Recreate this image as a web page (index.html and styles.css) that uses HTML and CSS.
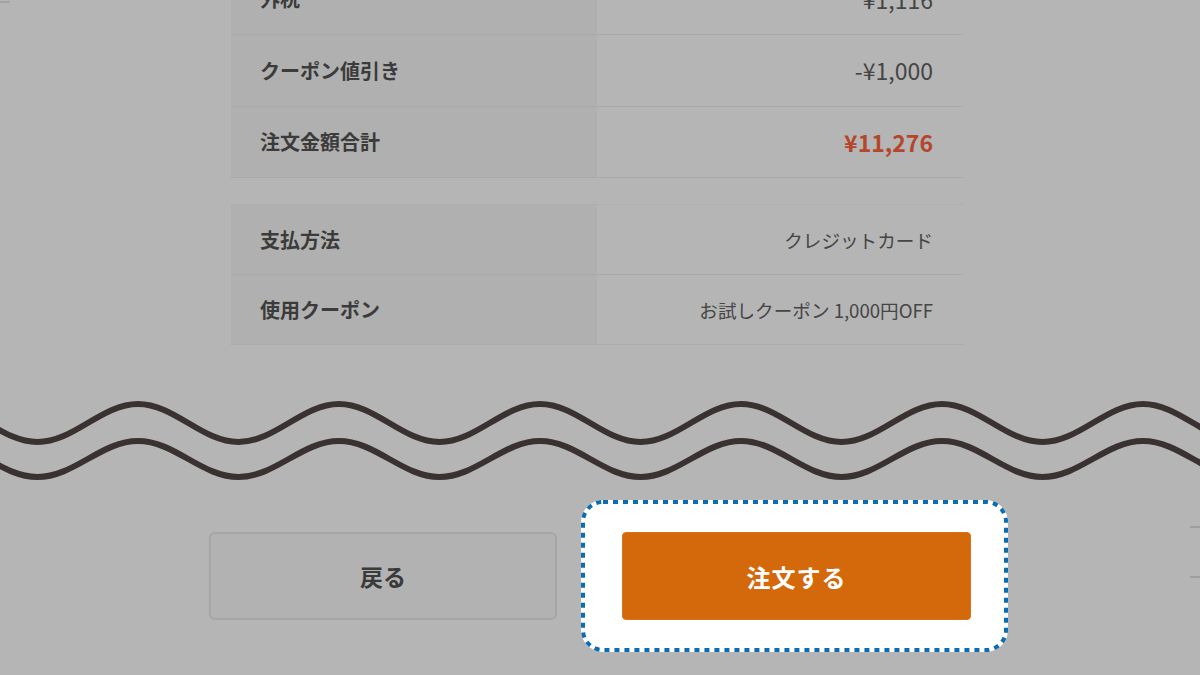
FILE: index.html
```html
<!DOCTYPE html>
<html lang="ja">
<head>
<meta charset="utf-8">
<title>注文確認</title>
<link rel="stylesheet" href="styles.css">
</head>
<body>
<div class="page">
  <div class="top-frag"></div>
  <div class="summary first">
    <div class="row"><div class="label">外税</div><div class="value num">¥1,116</div></div>
    <div class="row"><div class="label">クーポン値引き</div><div class="value num">-¥1,000</div></div>
    <div class="row"><div class="label">注文金額合計</div><div class="value num total">¥11,276</div></div>
  </div>
  <div class="summary second">
    <div class="row"><div class="label">支払方法</div><div class="value">クレジットカード</div></div>
    <div class="row"><div class="label">使用クーポン</div><div class="value">お試しクーポン 1,000円OFF</div></div>
  </div>
  <svg class="waves" width="1200" height="100" viewBox="0 0 1200 100" aria-hidden="true">
    <path d="M -63 15 c 36.6 0 63.9 38 100.5 38 s 63.9 -38 100.5 -38 s 63.9 38 100.5 38 s 63.9 -38 100.5 -38 s 63.9 38 100.5 38 s 63.9 -38 100.5 -38 s 63.9 38 100.5 38 s 63.9 -38 100.5 -38 s 63.9 38 100.5 38 s 63.9 -38 100.5 -38 s 63.9 38 100.5 38 s 63.9 -38 100.5 -38 s 63.9 38 100.5 38" />
    <path d="M -63 52 c 36.6 0 63.9 36 100.5 36 s 63.9 -36 100.5 -36 s 63.9 36 100.5 36 s 63.9 -36 100.5 -36 s 63.9 36 100.5 36 s 63.9 -36 100.5 -36 s 63.9 36 100.5 36 s 63.9 -36 100.5 -36 s 63.9 36 100.5 36 s 63.9 -36 100.5 -36 s 63.9 36 100.5 36 s 63.9 -36 100.5 -36 s 63.9 36 100.5 36" />
  </svg>
  <div class="actions">
    <button class="btn btn-back" type="button">戻る</button>
    <div class="focus-ring">
      <svg class="ring-line" width="427" height="152" viewBox="0 0 427 152" aria-hidden="true">
        <rect x="2" y="2" width="423" height="148" rx="20" ry="20" />
      </svg>
      <button class="btn btn-order" type="button">注文する</button>
    </div>
    <div class="edge-frag"></div>
  </div>
</div>
</body>
</html>
```
FILE: styles.css
```css
* { box-sizing: border-box; }
html, body { margin: 0; padding: 0; }
body {
  width: 1200px;
  height: 675px;
  overflow: hidden;
  background: #b5b5b5;
  font-family: "Noto Sans CJK JP", "Noto Sans", sans-serif;
  color: #3c3c3c;
}
.page {
  width: 1200px;
  height: 675px;
  display: flex;
  flex-direction: column;
}
.top-frag {
  width: 10px;
  height: 2px;
  margin-top: 1px;
  background: #a3a3a3;
  flex: none;
}
.summary {
  width: 732px;
  margin-left: 231px;
  flex: none;
}
.summary.first {
  margin-top: -39.5px;
}
.summary.second {
  margin-top: 26px;
  border-top: 1px dotted #a9a9a9;
}
.row {
  display: flex;
  height: 71.5px;
  border-bottom: 1px solid #aaaaaa;
}
.second .row { height: 70px; }
.label {
  width: 366px;
  flex: none;
  background: #b0b0b0;
  padding-left: 29px;
  display: flex;
  align-items: center;
  font-size: 20px;
  font-weight: 700;
  color: #3b3b3b;
}
.value {
  flex: 1;
  display: flex;
  align-items: center;
  justify-content: flex-end;
  padding-right: 30px;
  font-size: 18.6px;
  color: #454545;
}
.value.num {
  font-size: 23px;
}
.value.total {
  color: #b3462b;
  font-weight: 700;
}
.waves {
  display: block;
  flex: none;
  margin-top: 44px;
}
.waves path {
  fill: none;
  stroke: #3a3230;
  stroke-width: 6;
  stroke-linecap: round;
}
.actions {
  display: flex;
  align-items: center;
  padding-left: 209px;
  margin-top: 11px;
  flex: none;
}
.btn {
  width: 348px;
  height: 88px;
  font-family: "Noto Sans CJK JP", "Noto Sans", sans-serif;
  font-weight: 700;
  cursor: pointer;
}
.btn-back {
  background: #b2b2b2;
  border: 2px solid #a6a6a6;
  border-radius: 6px;
  font-size: 23px;
  color: #3a3a3a;
}
.focus-ring {
  position: relative;
  width: 427px;
  height: 152px;
  margin-left: 24px;
  background: #ffffff;
  border-radius: 22px;
  padding: 32px 37px 32px 41px;
}
.ring-line {
  position: absolute;
  left: 0;
  top: 0;
  display: block;
}
.ring-line rect {
  fill: none;
  stroke: #0a6db3;
  stroke-width: 4;
  stroke-dasharray: 5 5;
}
.btn-order {
  position: relative;
  display: block;
  width: 349px;
  background: #d4690c;
  border: 1px solid #d87420;
  border-radius: 4px;
  font-size: 24px;
  letter-spacing: 1px;
  color: #ffffff;
}
.edge-frag {
  margin-left: auto;
  align-self: flex-start;
  margin-top: 26px;
  width: 10px;
  height: 52px;
  border-top: 2px solid #9e9e9e;
  border-bottom: 2px solid #9e9e9e;
}
```
